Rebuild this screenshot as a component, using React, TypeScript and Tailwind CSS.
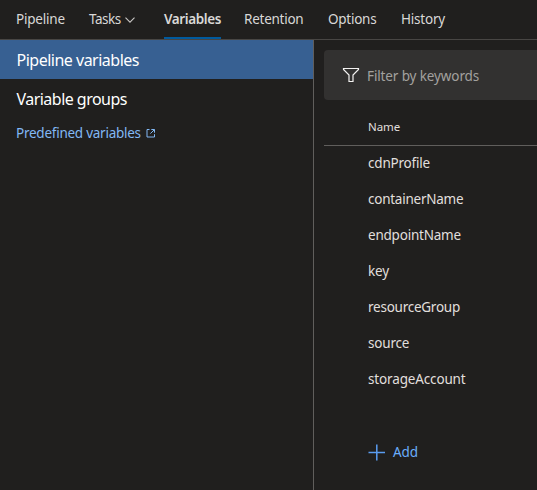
import React from "react";

const variables = [
  { name: "cdnProfile", tracking: "tracking-[-0.2px]" },
  { name: "containerName", tracking: "tracking-[-0.25px]" },
  { name: "endpointName", tracking: "tracking-[-0.22px]" },
  { name: "key", tracking: "tracking-[-0.2px]" },
  { name: "resourceGroup", tracking: "tracking-[-0.25px]" },
  { name: "source", tracking: "tracking-[-0.2px]" },
  { name: "storageAccount", tracking: "tracking-[-0.15px]" },
];

function Tabs() {
  return (
    <nav className="flex h-10 shrink-0 gap-6 border-b border-[#484644] pl-4 leading-[39px] text-[#d9d8d7]">
      <span className="w-[49px] tracking-[-0.2px]">Pipeline</span>
      <span className="flex w-[51px] items-center tracking-[-0.5px]">
        <span className="w-[35px]">Tasks</span>
        <svg width="12" height="12" viewBox="0 0 12 12" fill="none" stroke="#c8c6c4" strokeWidth="1.1">
          <path d="M1.5 3.7 6 8.2 10.5 3.7" />
        </svg>
      </span>
      <span className="h-[39px] w-[57px] border-b-2 border-[#005a9e] font-semibold tracking-[-0.4px]">Variables</span>
      <span className="-ml-px w-[60px] tracking-[-0.25px]">Retention</span>
      <span className="w-[49px] tracking-[-0.25px]">Options</span>
      <span className="tracking-[-0.2px]">History</span>
    </nav>
  );
}

function Sidebar() {
  return (
    <aside className="flex w-[314px] shrink-0 flex-col border-r border-[#605e5c] text-base text-white">
      <div className="h-[39px] bg-[#376092] pl-[16.5px] leading-[40px] tracking-[-0.5px]">Pipeline variables</div>
      <div className="h-[39px] pl-[16.5px] leading-[40px] tracking-[-0.53px]">Variable groups</div>
      <a className="flex h-[30px] items-center pl-4 text-[13.5px] text-[#82b8f4]">
        <span className="w-[130px] tracking-[-0.25px]">Predefined variables</span>
        <svg width="10" height="10" viewBox="0 0 10 10" fill="none" stroke="currentColor">
          <path d="M3.5 1.5H1v7.5h7.5V6.2M5.3 1.5H8.5V4.7M8.3 1.7 4.4 5.6" />
        </svg>
      </a>
    </aside>
  );
}

export default function App() {
  return (
    <div className="flex h-[490px] w-[537px] flex-col overflow-hidden whitespace-nowrap bg-[#201f1e] font-['Noto_Sans','Open_Sans',sans-serif] text-[13.5px]">
      <Tabs />
      <div className="flex flex-1">
        <Sidebar />
        <main className="flex min-w-0 flex-1 flex-col pl-2.5 pt-2.5 text-[#e1dfdd]">
          <div className="flex h-[50px] items-center rounded-l bg-[#323130] pl-[18px] text-[#a3a19f]">
            <svg className="mr-[7px]" width="18" height="16" viewBox="0 0 18 16" fill="none" stroke="#f3f2f1" strokeWidth="1.2">
              <path d="M1.5 1.5H16.5V2.4L11 8V14.5H7V8L1.5 2.4Z" />
            </svg>
            <span className="pt-0.5 tracking-[-0.12px]">Filter by keywords</span>
          </div>
          <div className="h-[46px] border-b border-[#605e5c] pl-11 pt-[9px] text-[11.5px] leading-9 tracking-[-0.1px]">Name</div>
          <ul>
            {variables.map((item) => (
              <li key={item.name} className="h-9 pl-11 leading-[35px]">
                <span className={item.tracking}>{item.name}</span>
              </li>
            ))}
          </ul>
          <button className="mt-[38px] flex h-8 items-center gap-2 pl-11 text-[#6aaefc]">
            <svg width="17" height="17" viewBox="0 0 17 17" stroke="#5a9cf0" strokeWidth="1.5">
              <path d="M0.5 8.5h16.5M8.8 .5v16" />
            </svg>
            <span className="tracking-[-0.1px]">Add</span>
          </button>
        </main>
      </div>
    </div>
  );
}
